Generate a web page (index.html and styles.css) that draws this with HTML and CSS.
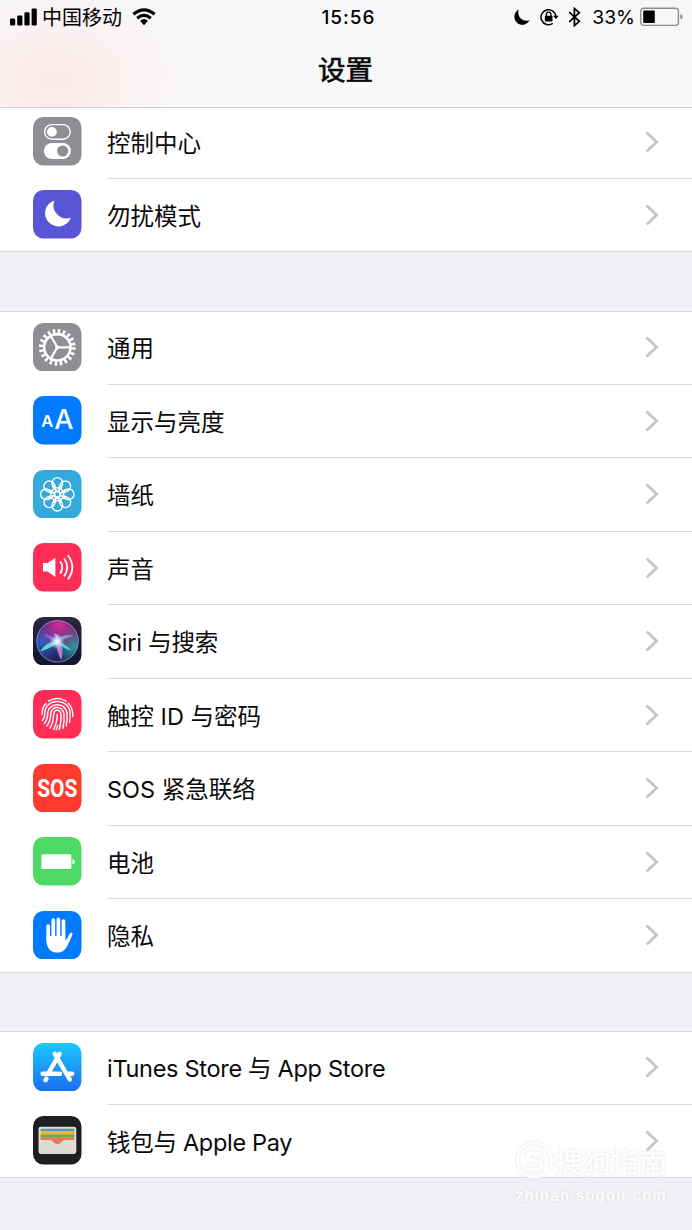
FILE: index.html
```html
<!DOCTYPE html>
<html lang="zh-CN">
<head>
    <meta charset="utf-8">
    <title>设置</title>
    <link rel="stylesheet" href="styles.css">
</head>
<body>
    <svg class="defs">
        <defs>
            <linearGradient id="storeBg" x1="0" y1="0" x2="0" y2="1">
                <stop offset="0" stop-color="#1cc8fb"/><stop offset="1" stop-color="#1b6ef3"/>
            </linearGradient>
            <linearGradient id="siriBg" x1="0" y1="0" x2="0" y2="1">
                <stop offset="0" stop-color="#2d2444"/><stop offset="1" stop-color="#0d1730"/>
            </linearGradient>
            <radialGradient id="siriPink" cx=".55" cy=".1" r=".65">
                <stop offset="0" stop-color="#d62b9b"/><stop offset="1" stop-color="#d62b9b" stop-opacity="0"/>
            </radialGradient>
            <radialGradient id="siriTeal" cx=".9" cy=".6" r=".5">
                <stop offset="0" stop-color="#239d9d"/><stop offset="1" stop-color="#239d9d" stop-opacity="0"/>
            </radialGradient>
            <radialGradient id="siriBlue" cx=".12" cy=".5" r=".5">
                <stop offset="0" stop-color="#2364cf"/><stop offset="1" stop-color="#2364cf" stop-opacity="0"/>
            </radialGradient>
            <radialGradient id="siriGlow">
                <stop offset="0" stop-color="#fff"/><stop offset=".3" stop-color="#d7f4ff" stop-opacity=".85"/><stop offset="1" stop-color="#8ccfff" stop-opacity="0"/>
            </radialGradient>
            <symbol id="arrow" viewBox="0 0 14 22"><path d="M1.6 1.4 11.6 11 1.6 20.6" fill="none" stroke="#c5c5ca" stroke-width="2.8"/></symbol>
        </defs>
    </svg>

    <header class="header">
        <div class="status">
            <div class="status-left">
                <svg class="signal" width="27" height="18" viewBox="0 0 27 18">
                    <rect x="0" y="10.5" width="5.2" height="7" rx="1.3"/><rect x="7.2" y="7.5" width="5.2" height="10" rx="1.3"/>
                    <rect x="14.4" y="4.2" width="5.2" height="13.3" rx="1.3"/><rect x="21.6" y="0.5" width="5.2" height="17" rx="1.3"/>
                </svg>
                <span class="carrier">中国移动</span>
                <svg class="wifi" width="24" height="18" viewBox="0 0 24 18">
                    <path d="M1.4 6.2Q12-2.6 22.6 6.2M5.2 10.2Q12 4.6 18.8 10.2" fill="none" stroke="#000" stroke-width="3.2"/>
                    <path d="M8 12.7q4-3.2 8 0L12 17.3z"/>
                </svg>
            </div>
            <div class="time">15:56</div>
            <div class="status-right">
                <svg width="16" height="16" viewBox="0 0 16 16"><path d="M4.8.6A8 8 0 1 0 15.6 11.2 8.3 8.3 0 0 1 4.8.6z"/></svg>
                <svg class="lock" width="19" height="18" viewBox="0 0 19 18">
                    <path d="M12.8 15.4A7.5 7.5 0 1 1 16 8.6" fill="none" stroke="#000" stroke-width="1.5"/>
                    <path d="M13.2 7.8h5.4l-2.7 3.5z"/><rect x="4.9" y="7.8" width="7.6" height="5.6" rx=".7"/>
                    <path d="M6.4 8V6.4a2.3 2.3 0 0 1 4.6 0V8" fill="none" stroke="#000" stroke-width="1.3"/>
                </svg>
                <svg class="bluetooth" width="13" height="20" viewBox="0 0 13 20"><path d="M1.2 5.2 11.3 14.3 6.4 18.6V1.4L11.3 5.7 1.2 14.8" fill="none" stroke="#000" stroke-width="1.7"/></svg>
                <span class="percent">33%</span>
                <svg class="battery" width="43" height="20" viewBox="0 0 43 20">
                    <rect x=".8" y="1.2" width="37.6" height="17.2" rx="3" fill="none" stroke="#8d8d8f" stroke-width="1.4"/>
                    <rect x="3.2" y="3.6" width="11.6" height="12.4" rx="1"/>
                    <path d="M40.4 7q2.2.6 2.2 2.8t-2.2 2.8z" fill="#8d8d8f"/>
                </svg>
            </div>
        </div>
        <h1 class="title">设置</h1>
    </header>

    <main>
        <section class="group first">
            <a class="row">
                <svg class="icon" viewBox="0 0 48.5 48.5">
                    <rect width="48.5" height="48.5" rx="10.5" fill="#8e8e93"/>
                    <rect x="11.6" y="7.6" width="25.6" height="14.6" rx="7.3" fill="none" stroke="#fff" stroke-width="1.4"/>
                    <circle cx="18.9" cy="14.9" r="4.9" fill="#fff"/>
                    <rect x="10.9" y="26" width="27" height="16" rx="8" fill="#fff"/>
                    <circle cx="29.6" cy="34" r="5.6" fill="#8e8e93"/>
                </svg>
                <span class="label">控制中心</span><svg class="arrow"><use href="#arrow"/></svg>
            </a>
            <a class="row">
                <svg class="icon" viewBox="0 0 48.5 48.5">
                    <rect width="48.5" height="48.5" rx="10.5" fill="#5856d6"/>
                    <path d="M21.4 10.4A13.3 13.3 0 1 0 37.8 27.8 13.2 13.2 0 0 1 21.4 10.4z" fill="#fff"/>
                </svg>
                <span class="label">勿扰模式</span><svg class="arrow"><use href="#arrow"/></svg>
            </a>
        </section>

        <section class="group">
            <a class="row">
                <svg class="icon" viewBox="0 0 48.5 48.5">
                    <rect width="48.5" height="48.5" rx="10.5" fill="#8e8e93"/>
                    <g fill="none" stroke="#fff">
                        <circle cx="24.3" cy="24.3" r="13.2" stroke-width="2.6"/>
                        <circle cx="24.3" cy="24.3" r="16.2" stroke-width="4.4" stroke-dasharray="2.545 2.544"/>
                        <path d="M24.3 24.3h13M24.3 24.3l-6.5-11.3M24.3 24.3l-6.5 11.3" stroke-width="2.2"/>
                    </g>
                    <circle cx="24.3" cy="24.3" r="2" fill="#fff"/>
                </svg>
                <span class="label">通用</span><svg class="arrow"><use href="#arrow"/></svg>
            </a>
            <a class="row">
                <svg class="icon" viewBox="0 0 48.5 48.5">
                    <rect width="48.5" height="48.5" rx="10.5" fill="#007aff"/>
                    <text class="small-a" x="8.2" y="30.8">A</text><text class="big-a" x="21.2" y="33">A</text>
                </svg>
                <span class="label">显示与亮度</span><svg class="arrow"><use href="#arrow"/></svg>
            </a>
            <a class="row">
                <svg class="icon" viewBox="0 0 48.5 48.5">
                    <rect width="48.5" height="48.5" rx="10.5" fill="#34aadc"/>
                    <g fill="none" stroke="#fff" stroke-width="1.4">
                        <g id="petals"><path id="petal" d="M24.3 21.5C21.4 20 19 16 19 12.9a5.3 5.3 0 0 1 10.6 0C29.6 16 27.2 20 24.3 21.5z"/>
                        <use href="#petal" transform="rotate(90 24.3 24.3)"/><use href="#petal" transform="rotate(180 24.3 24.3)"/><use href="#petal" transform="rotate(270 24.3 24.3)"/></g>
                        <use href="#petals" transform="rotate(45 24.3 24.3)"/>
                        <circle cx="24.3" cy="24.3" r="2.8"/>
                        <!-- arcs that close off the round tip of each petal -->
                        <g id="tips"><path id="tip" d="M20 15.8Q24.3 20.4 28.6 15.8"/>
                        <use href="#tip" transform="rotate(90 24.3 24.3)"/><use href="#tip" transform="rotate(180 24.3 24.3)"/><use href="#tip" transform="rotate(270 24.3 24.3)"/></g>
                        <use href="#tips" transform="rotate(45 24.3 24.3)"/>
                    </g>
                </svg>
                <span class="label">墙纸</span><svg class="arrow"><use href="#arrow"/></svg>
            </a>
            <a class="row">
                <svg class="icon" viewBox="0 0 48.5 48.5">
                    <rect width="48.5" height="48.5" rx="10.5" fill="#ff2d55"/>
                    <path d="M10 20h4.6l7.8-5.3v19.2l-7.8-5.3H10z" fill="#fff"/>
                    <path d="M27.2 18.2q4.2 6.1 0 12.2M31 15.2q6.6 9.1 0 18.2M34.8 12.2q9.2 12.1 0 24.2" fill="none" stroke="#fff" stroke-width="1.8"/>
                </svg>
                <span class="label">声音</span><svg class="arrow"><use href="#arrow"/></svg>
            </a>
            <a class="row">
                <svg class="icon" viewBox="0 0 48.5 48.5">
                    <rect width="48.5" height="48.5" rx="10.5" fill="url(#siriBg)"/>
                    <circle cx="24.5" cy="24.3" r="20.8" fill="#25255e"/>
                    <circle cx="24.5" cy="24.3" r="20.8" fill="url(#siriBlue)"/>
                    <circle cx="24.5" cy="24.3" r="20.8" fill="url(#siriTeal)"/>
                    <circle cx="24.5" cy="24.3" r="20.8" fill="url(#siriPink)"/>
                    <path d="M23 24Q13 25 7 34.5 19 31 26 25z" fill="#6ff0df" opacity=".85"/>
                    <path d="M22.5 23Q29 24 39.5 34 27 31 22.5 23z" fill="#54e0c5" opacity=".85"/>
                    <path d="M23 24Q23.5 35 28.5 43 31.5 31 25.5 22z" fill="#d58ae8" opacity=".85"/>
                    <path d="M22 25Q29 15 41 19.5 33 20 25 26z" fill="#8fb9e8" opacity=".65"/>
                    <path d="M22 25Q24 19 20 16 27 17 27 24z" fill="#f4b8ed" opacity=".7"/>
                    <path d="M24 24Q19 18 11 17 17 24 24 25z" fill="#8779ed" opacity=".7"/>
                    <circle cx="24" cy="24.6" r="8" fill="url(#siriGlow)"/>
                    <circle cx="24.5" cy="24.3" r="20.8" fill="none" stroke="#c6bedb" stroke-opacity=".75" stroke-width=".8"/>
                </svg>
                <span class="label siri">Siri 与搜索</span><svg class="arrow"><use href="#arrow"/></svg>
            </a>
            <a class="row">
                <svg class="icon" viewBox="0 0 48.5 48.5">
                    <rect width="48.5" height="48.5" rx="10.5" fill="#ff2d55"/>
                    <g fill="none" stroke="#fff" stroke-width="1.45" stroke-linecap="round">
                        <path d="M15.5 11.2Q24.5 6 33 11.2M9 24.5Q9 17 13 13.4M35.3 13.2Q40 17.4 39.8 26.5"/>
                        <path d="M9.4 30.5Q11.7 27.7 11.8 23.5C12 7.5 35 8 36.9 21.5Q37.4 27 36.6 32.4"/>
                        <path d="M11.4 33.6Q14.6 29.5 14.7 24C14.8 12.2 32.4 11.2 34 23.2Q34.5 30 33.2 36"/>
                        <path d="M13.9 36Q17.5 31 17.7 24.3C17.8 15.4 29.6 15.2 31 23.8Q31.6 31.8 29.9 38.3"/>
                        <path d="M17 38Q20.5 32 20.6 24.7C20.7 18.7 27.2 18.8 28 24.4Q28.5 33 26.2 39.6"/>
                        <path d="M20.6 39.3Q24.3 32.5 24.3 24.5M24.8 35.5Q23.8 38 23.2 39.8"/>
                    </g>
                </svg>
                <span class="label">触控 ID 与密码</span><svg class="arrow"><use href="#arrow"/></svg>
            </a>
            <a class="row">
                <svg class="icon" viewBox="0 0 48.5 48.5">
                    <rect width="48.5" height="48.5" rx="10.5" fill="#ff3b30"/>
                    <text class="sos" transform="translate(24.3 33.4) scale(.82 1)" text-anchor="middle">SOS</text>
                </svg>
                <span class="label">SOS 紧急联络</span><svg class="arrow"><use href="#arrow"/></svg>
            </a>
            <a class="row">
                <svg class="icon" viewBox="0 0 48.5 48.5">
                    <rect width="48.5" height="48.5" rx="10.5" fill="#4cd964"/>
                    <rect x="8.4" y="17.2" width="30" height="14.8" rx="1.2" fill="#fff"/>
                    <path d="M39.5 22q2.3.6 2.3 2.7t-2.3 2.7z" fill="#fff"/>
                </svg>
                <span class="label">电池</span><svg class="arrow"><use href="#arrow"/></svg>
            </a>
            <a class="row">
                <svg class="icon" viewBox="0 0 48.5 48.5">
                    <rect width="48.5" height="48.5" rx="10.5" fill="#007aff"/>
                    <path d="M15.2 15v15M20.3 9.2V27M25.4 8.4V27M30.5 10.2V28" stroke="#fff" stroke-width="3.7" stroke-linecap="round"/>
                    <path d="M13.5 25h18.7v4.4c2.4-1.5 3.2-4.8 4.6-6.9 1-1.5 3.2-.8 2.6.8-1.1 3-2.7 7.1-4.7 10.7-2.4 4.7-4.9 7.6-10.2 7.6-7.2 0-11-4.5-11-12.6z" fill="#fff"/>
                </svg>
                <span class="label">隐私</span><svg class="arrow"><use href="#arrow"/></svg>
            </a>
        </section>

        <section class="group">
            <a class="row">
                <svg class="icon" viewBox="0 0 48.5 48.5">
                    <rect width="48.5" height="48.5" rx="10.5" fill="url(#storeBg)"/>
                    <g fill="none" stroke="#fff" stroke-width="4.4" stroke-linecap="round">
                        <path d="M26.6 10.8 15.8 29.5M21.8 10.8 36.8 36.5M9.6 30.7H27M35.5 30.7h3.7M13.4 35.6l-.9 1.5"/>
                    </g>
                </svg>
                <span class="label latin">iTunes Store 与 App Store</span><svg class="arrow"><use href="#arrow"/></svg>
            </a>
            <a class="row">
                <svg class="icon" viewBox="0 0 48.5 48.5">
                    <rect width="48.5" height="48.5" rx="10.5" fill="#1f1e20"/>
                    <rect x="5.5" y="10.7" width="37.8" height="27.2" rx="2.4" fill="#dedbd0"/>
                    <path d="M7.5 15v-1.2q0-1.1 1.1-1.1h31.6q1.1 0 1.1 1.1V15z" fill="#4a9dc0"/>
                    <path d="M7.5 15h33.8v4H7.5z" fill="#efb72f"/>
                    <path d="M7.5 18.4h33.8v3.4H7.5z" fill="#6aaf43"/>
                    <path d="M7.5 21.5h33.8v2.6H32c-3 0-3.8 4-7.6 4s-4.6-4-7.6-4H7.5z" fill="#ef7563"/>
                </svg>
                <span class="label latin">钱包与 Apple Pay</span><svg class="arrow"><use href="#arrow"/></svg>
            </a>
        </section>
    </main>

    <div class="watermark">
        <div class="brand">
            <svg width="38" height="38" viewBox="0 0 38 38">
                <g fill="none" stroke="#fff"><path d="M30 31.5A17 17 0 1 1 34 27" stroke-width="3"/>
                <path d="M26.5 12.5Q13 9 12.5 14.5c0 5 14 3.2 14 8.5 0 5.6-8.5 5.4-15 2.8" stroke-width="4"/></g>
            </svg>
            <span>搜狗指南</span>
        </div>
        <div class="site">zhinan.sogou.com</div>
    </div>
</body>
</html>
```
FILE: styles.css
```css
* { box-sizing: border-box; }
body { margin: 0; width: 692px; height: 1230px; overflow: hidden; position: relative; background: #efeff4; color: #0a0a0a; font-family: Inter, "Noto Sans CJK SC", sans-serif; }
svg { display: block; flex: none; }
.defs { position: absolute; width: 0; height: 0; }

.header { height: 108px; border-bottom: 1px solid #d3d1d4; background: radial-gradient(ellipse 135px 100px at 55px 80px, #fce8e8, rgba(252, 236, 236, .6) 50%, rgba(249, 249, 250, 0)), linear-gradient(#f7f7fa, #f9f9f9); }
.status { display: grid; grid-template-columns: 1fr auto 1fr; align-items: center; height: 35px; padding: 0 9px 0 10px; color: #000; }
.status-left, .status-right { display: flex; align-items: center; }
.status-right { justify-content: flex-end; }
.status-right svg { margin-top: -1px; }
.carrier { margin: 0 10px 0 5px; font-size: 20px; line-height: 34px; }
.signal { margin-top: -1px; }
.wifi { margin-top: -2px; }
.time { padding-left: 4px; font-size: 19px; font-weight: 500; letter-spacing: 1px; }
.status-right .lock { margin-left: 10px; }
.status-right .bluetooth { margin-left: 9px; }
.percent { margin: -1px 5px 0 11px; font-size: 19.3px; }
.title { margin: 0; font-size: 27.5px; line-height: 71px; font-weight: 400; text-align: center; text-indent: -1px; -webkit-text-stroke: .7px #0a0a0a; }

.group { margin-bottom: 58.7px; background: #fff; box-shadow: inset 0 1px #d9d9dd, inset 0 -1px #d9d9dd; }
.first { box-shadow: inset 0 -1px #d9d9dd; margin-bottom: 59px; }
.row { position: relative; display: flex; align-items: center; height: 73.5px; padding-left: 33.3px; }
.row:not(:last-child)::after { content: ""; position: absolute; right: 0; bottom: 0; left: 107px; height: 1px; background: #dcdce0; }
.first .row:first-child { height: 71px; }
.first .row:last-child { height: 73px; }
.first .row:first-child .icon { margin-top: -4px; }
.first .row:first-child .arrow { margin-top: -4px; }
.first .row:first-child .label { padding-bottom: 3px; }
.icon { width: 48.5px; height: 48.5px; margin: -2px 25.2px 0 0; }
.label { flex: 1; padding-bottom: 1px; font-size: 23.5px; white-space: pre; }
.siri { letter-spacing: -.2px; }
.latin { letter-spacing: -.3px; }
.arrow { width: 14px; height: 22px; margin: -1px 33px 0 0; }

.small-a, .big-a { fill: #fff; font-family: Inter, sans-serif; }
.small-a { font-size: 16.5px; font-weight: 600; }
.big-a { font-size: 27px; font-weight: 500; }
.sos { fill: #fff; font-family: Roboto, sans-serif; font-size: 25.5px; font-weight: 700; }

.watermark { position: absolute; left: 515px; top: 1142px; color: #fff; opacity: .85; filter: drop-shadow(0 0 1px #d8d8dc); }
.brand { display: flex; align-items: center; gap: 2px; height: 38px; font-size: 28px; }
.brand span { -webkit-text-stroke: .6px #fff; }
.site { font-size: 15px; font-weight: 600; line-height: 32px; letter-spacing: 1.1px; }
```
